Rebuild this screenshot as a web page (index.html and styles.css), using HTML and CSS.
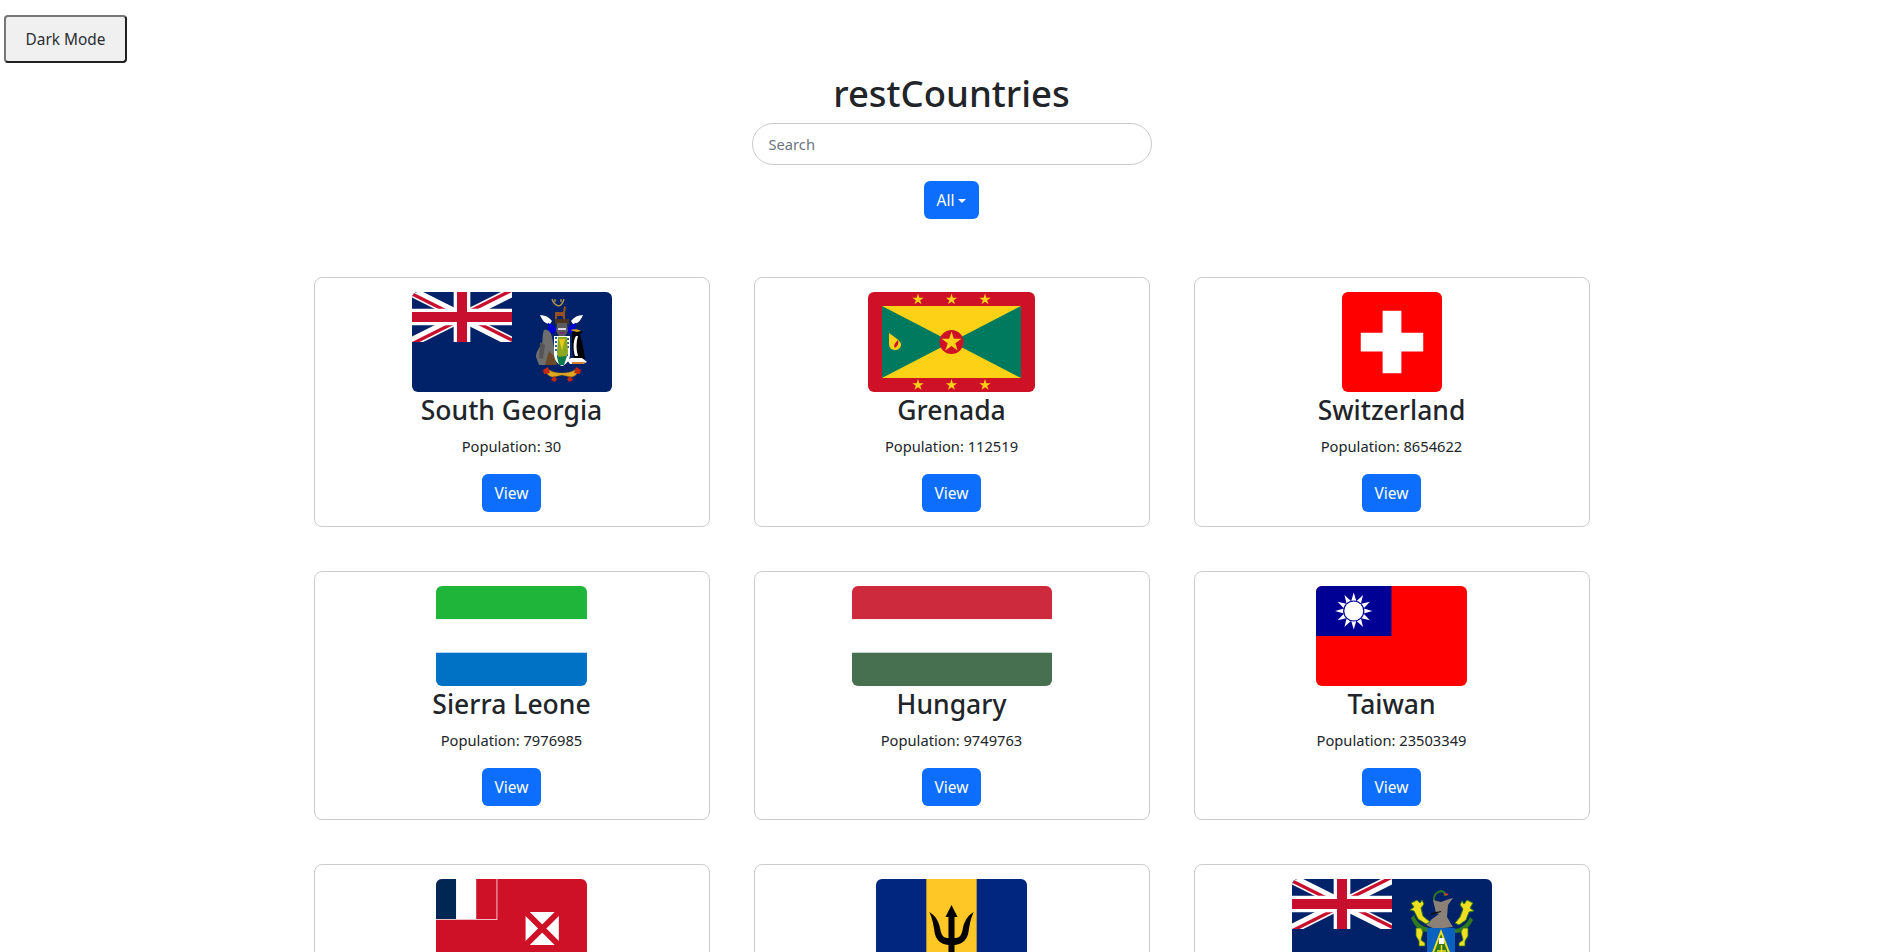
FILE: index.html
```html
<!DOCTYPE html>
<html lang="en">
<head>
<meta charset="utf-8">
<title>restCountries</title>
<link rel="stylesheet" href="styles.css">
</head>
<body>
<button class="theme-toggle" type="button">Dark Mode</button>
<header class="header">
  <h1 class="title">restCountries</h1>
  <input class="search" type="text" placeholder="Search">
  <button class="btn" type="button">All<span class="caret"></span></button>
</header>
<main class="grid">

  <article class="card">
    <svg class="flag" width="200" height="100" viewBox="0 0 200 100">
      <rect width="200" height="100" fill="#012169"/>
      <svg width="100" height="50" viewBox="0 0 60 30">
        <clipPath id="uj1"><path d="M30,15h30v15zv15h-30zh-30v-15zv-15h30z"/></clipPath>
        <rect width="60" height="30" fill="#012169"/>
        <path d="M0,0L60,30M60,0L0,30" stroke="#fff" stroke-width="6"/>
        <path d="M0,0L60,30M60,0L0,30" clip-path="url(#uj1)" stroke="#c8102e" stroke-width="4"/>
        <path d="M30,0V30M0,15H60" stroke="#fff" stroke-width="10"/>
        <path d="M30,0V30M0,15H60" stroke="#c8102e" stroke-width="6"/>
      </svg>
      <path d="M140,7c1,4 3,6 7,7M152,7c-1,4-2,6-5,7M143,7v3M149,7v3" stroke="#b8984a" stroke-width="1.300" fill="none"/>
      <path d="M143,20h8l1-6 2,1-1,6v7h-1.500l-1-4h-5l-1,4h-1.500z" fill="#94501f"/>
      <path d="M143,27h14v5h-14z" fill="#4a3320"/>
      <path d="M128,23c5,0 9,2 12,6l-2,3c-5,0-8-4-10-9zM171,23c-5,0-9,2-12,6l2,3c5,0 8-4 10-9z" fill="#fff"/>
      <path d="M136,31l5,2 3,3h12l3-3 5-2-1,8-5,3-3-3h-11l-3,3-5-3z" fill="#0000d0"/>
      <path d="M145,31h10l1,8-3,5h-6l-3-5z" fill="#5d5a5a"/>
      <path d="M146,36h8v2h-8z" fill="#d8d8f0"/>
      <path d="M147,40h6l-1,2h-4z" fill="#7a2a7a"/>
      <path d="M132,38c4-1 7,2 8,7l2,10 1,18h-16l-3-8c0-6 4-10 6-13 1-4 0-9 2-14z" fill="#6e6e6e"/>
      <path d="M128,50l5,3-2,14-4-1z" fill="#555"/>
      <path d="M133,73l4-14 5,5 3,9z" fill="#6b4a2a"/>
      <path d="M142,44h16v18c0,6-4,11-8,12-4-1-8-6-8-12z" fill="#fff"/>
      <path d="M143,45h2v2h-2zM143,49h2v2h-2zM143,53h2v2h-2zM143,57h2v2h-2zM145,63h2v2h-2zM155,46h2v2h-2zM155,50h2v2h-2zM155,54h2v2h-2zM154,62h2v2h-2z" fill="#2d5fa8"/>
      <path d="M146,45h9l1,15c0,3-3,7-6,8-3-1-5-5-5-8z" fill="#8aa820"/>
      <path d="M147,47h6l-3,12z" fill="#e6c818"/>
      <path d="M145,65l10,-1-3,9h-5z" fill="#0a7a4a"/>
      <path d="M160,40c3-1 7-2 11,0l-3,2 3,12 2,13h-11l-2-13z" fill="#000"/>
      <path d="M164,44c-3,4-3,14-1,20h3c-2-6-2-14 0-20z" fill="#fff"/>
      <path d="M158,38c4-1 8-1 11,1l-4,1z" fill="#d8a020"/>
      <path d="M155,68l4-2h11l5,4-4,2h-13z" fill="#fff"/>
      <path d="M160,70h14l-3,2h-11z" fill="#d88030"/>
      <path d="M135,76c2,3 8,5 15,5s13-2 15-5l2,3c-2,3-5,6-8,6l-9-2-9,2c-3,0-6-3-8-6z" fill="#e0a820" stroke="#a87810" stroke-width=".5"/>
      <path d="M131,78l5-3 2,6-6,1zM169,78l-5-3-2,6 6,1zM139,88l3-4 3,3-2,3zM161,88l-3-4-3,3 2,3z" fill="#c82810"/>
    </svg>
    <h3 class="name">South Georgia</h3>
    <p class="population">Population: 30</p>
    <a class="btn">View</a>
  </article>

  <article class="card">
    <svg class="flag" width="167" height="100" viewBox="0 0 167 100">
      <defs><polygon id="st" points="0,-1 .225,-.309 .951,-.309 .363,.118 .588,.809 0,.382 -.588,.809 -.363,.118 -.951,-.309 -.225,-.309"/></defs>
      <rect width="167" height="100" fill="#ce1126"/>
      <rect x="14" y="14" width="139" height="72" fill="#007a5e"/>
      <path d="M14,14H153L14,86H153z" fill="#fcd116"/>
      <circle cx="83.500" cy="50" r="12" fill="#ce1126"/>
      <g fill="#fcd116">
        <use href="#st" transform="translate(83.500 50) scale(10.500)"/>
        <use href="#st" transform="translate(50 7.500) scale(6)"/>
        <use href="#st" transform="translate(83.500 7.500) scale(6)"/>
        <use href="#st" transform="translate(117 7.500) scale(6)"/>
        <use href="#st" transform="translate(50 93) scale(6)"/>
        <use href="#st" transform="translate(83.500 93) scale(6)"/>
        <use href="#st" transform="translate(117 93) scale(6)"/>
      </g>
      <path d="M21,41c4,3 11,7 12,11 0,4-3,6-6,6-4,0-6-3-6-6z" fill="#fcd116"/>
      <path d="M27,56c-2-2 0-5 3-8 1,3 0,6-3,8z" fill="#ce1126"/>
    </svg>
    <h3 class="name">Grenada</h3>
    <p class="population">Population: 112519</p>
    <a class="btn">View</a>
  </article>

  <article class="card">
    <svg class="flag" width="100" height="100" viewBox="0 0 32 32">
      <rect width="32" height="32" fill="#f00"/>
      <path d="M13,6h6v7h7v6h-7v7h-6v-7h-7v-6h7z" fill="#fff"/>
    </svg>
    <h3 class="name">Switzerland</h3>
    <p class="population">Population: 8654622</p>
    <a class="btn">View</a>
  </article>

  <article class="card">
    <svg class="flag" width="151" height="100" viewBox="0 0 150 100" preserveAspectRatio="none">
      <rect width="150" height="33.300" fill="#1eb53a"/>
      <rect y="33.300" width="150" height="33.400" fill="#fff"/>
      <rect y="66.700" width="150" height="33.300" fill="#0072c6"/>
    </svg>
    <h3 class="name">Sierra Leone</h3>
    <p class="population">Population: 7976985</p>
    <a class="btn">View</a>
  </article>

  <article class="card">
    <svg class="flag" width="200" height="100" viewBox="0 0 200 100">
      <rect width="200" height="33.300" fill="#cd2a3e"/>
      <rect y="33.300" width="200" height="33.400" fill="#fff"/>
      <rect y="66.700" width="200" height="33.300" fill="#477050"/>
    </svg>
    <h3 class="name">Hungary</h3>
    <p class="population">Population: 9749763</p>
    <a class="btn">View</a>
  </article>

  <article class="card">
    <svg class="flag" width="151" height="100" viewBox="0 0 150 100" preserveAspectRatio="none">
      <defs><polygon id="ray" points="0,-18.500 2.800,-9 -2.800,-9" fill="#fff"/></defs>
      <rect width="150" height="100" fill="#fe0000"/>
      <rect width="75" height="50" fill="#000095"/>
      <g transform="translate(37.500 25)">
        <use href="#ray"/><use href="#ray" transform="rotate(30)"/><use href="#ray" transform="rotate(60)"/>
        <use href="#ray" transform="rotate(90)"/><use href="#ray" transform="rotate(120)"/><use href="#ray" transform="rotate(150)"/>
        <use href="#ray" transform="rotate(180)"/><use href="#ray" transform="rotate(210)"/><use href="#ray" transform="rotate(240)"/>
        <use href="#ray" transform="rotate(270)"/><use href="#ray" transform="rotate(300)"/><use href="#ray" transform="rotate(330)"/>
        <circle r="10.600" fill="#000095"/>
        <circle r="9.400" fill="#fff"/>
      </g>
    </svg>
    <h3 class="name">Taiwan</h3>
    <p class="population">Population: 23503349</p>
    <a class="btn">View</a>
  </article>

  <article class="card">
    <svg class="flag" width="151" height="100" viewBox="0 0 150 100" preserveAspectRatio="none">
      <rect width="150" height="100" fill="#ce1126"/>
      <rect width="61" height="41" fill="#f0c0c8"/>
      <rect width="20" height="40" fill="#002654"/>
      <rect x="20" width="20" height="40" fill="#fff"/>
      <rect x="40" width="20" height="40" fill="#ce1126"/>
      <rect x="89" y="33" width="33" height="33" fill="#fff"/>
      <path d="M89,33L122,66M122,33L89,66" stroke="#ce1126" stroke-width="6"/>
    </svg>
    <h3 class="name">Wallis and Futuna</h3>
    <p class="population">Population: 11750</p>
    <a class="btn">View</a>
  </article>

  <article class="card">
    <svg class="flag" width="151" height="100" viewBox="0 0 150 100" preserveAspectRatio="none">
      <rect width="150" height="100" fill="#00267f"/>
      <rect x="50" width="50" height="100" fill="#ffc726"/>
      <path d="M75,26l6,12h-3v21h1c4,0 6-3 7-8 1-6 3-13 11-18-3,6-4,13-5,19-1,9-6,13-14,14v12h-6v-12c-8-1-13-5-14-14-1-6-2-13-5-19 8,5 10,12 11,18 1,5 3,8 7,8h1V38h-3z" fill="#000"/>
    </svg>
    <h3 class="name">Barbados</h3>
    <p class="population">Population: 287371</p>
    <a class="btn">View</a>
  </article>

  <article class="card">
    <svg class="flag" width="200" height="100" viewBox="0 0 200 100">
      <rect width="200" height="100" fill="#012169"/>
      <svg width="100" height="50" viewBox="0 0 60 30">
        <clipPath id="uj2"><path d="M30,15h30v15zv15h-30zh-30v-15zv-15h30z"/></clipPath>
        <rect width="60" height="30" fill="#012169"/>
        <path d="M0,0L60,30M60,0L0,30" stroke="#fff" stroke-width="6"/>
        <path d="M0,0L60,30M60,0L0,30" clip-path="url(#uj2)" stroke="#c8102e" stroke-width="4"/>
        <path d="M30,0V30M0,15H60" stroke="#fff" stroke-width="10"/>
        <path d="M30,0V30M0,15H60" stroke="#c8102e" stroke-width="6"/>
      </svg>
      <path d="M142,22c-1-5 2-9 7-10 3,0 4,2 4,5" stroke="#2f7a1e" stroke-width="2" fill="none"/>
      <path d="M152,14l5,1-3,2z" fill="#e84020"/>
      <path d="M141,21l8,2 8-3 4-1-5,7-1,12 6,10-18,2-9-4 6-6 7-5-3-1z" fill="#8b8176"/>
      <path d="M139,34l10-2v1l-10,3z" fill="#111"/>
      <path d="M119,24l6-3 3,3 2,-3 2,4-3,4 2,8 7,6-4,2-8-5-4-8-4-1 4-3z" fill="#f0de20" stroke="#2f7a1e" stroke-width="1"/>
      <path d="M181,24l-6-3-3,4-2-3-2,4 3,4-3,8-5,6 4,2 7-5 3-8 5-1-4-3z" fill="#f0de20" stroke="#2f7a1e" stroke-width="1"/>
      <path d="M122,36c3,8 9,13 18,13l-4,4c-8,0-14-6-17-14zM178,38c-3,7-10,13-18,12l3,4c8,0 15-6 18-13z" fill="#2f7a1e"/>
      <path d="M124,49h5l2,4-2,8 4,3v3h-6v-5l-3-5z" fill="#f0de20" stroke="#2f7a1e" stroke-width=".8"/>
      <path d="M176,49h-5l-2,4 2,8-4,3v3h6v-5l3-5z" fill="#f0de20" stroke="#2f7a1e" stroke-width=".8"/>
      <path d="M135,49h28v30c0,8-8,14-14,16-6-2-14-8-14-16z" fill="#0a62c0"/>
      <path d="M149,50l13,34h-26z" fill="#f0de20"/>
      <path d="M149,55l10,27h-20z" fill="#2f7a1e"/>
      <rect x="147" y="59" width="5" height="6" fill="#fff"/>
      <path d="M149.500,66v16M145,72h9" stroke="#f0de20" stroke-width="1.500"/>
    </svg>
    <h3 class="name">Pitcairn Islands</h3>
    <p class="population">Population: 56</p>
    <a class="btn">View</a>
  </article>

</main>
</body>
</html>
```
FILE: styles.css
```css
* {
  box-sizing: border-box;
}

html {
  overflow: hidden;
}

body {
  margin: 0;
  background: #fff;
  color: #212529;
  font-family: "Noto Sans", "Open Sans", sans-serif;
  font-size: 16px;
  line-height: 1.5;
}

.theme-toggle {
  display: block;
  width: 123px;
  height: 48px;
  margin: 15px 0 0 4px;
  padding: 0;
  background: #f0f0f0;
  border: 2px outset #767676;
  border-radius: 4px;
  color: #2b2f33;
  font-family: inherit;
  font-size: 15.400px;
}

.header {
  display: flex;
  flex-direction: column;
  align-items: center;
}

.title {
  margin: 6px 0 6px;
  font-size: 36.500px;
  font-weight: 550;
  line-height: 48px;
}

.search {
  width: 400px;
  height: 42px;
  margin-bottom: 16px;
  padding: 0 16px;
  border: 1px solid #ccc;
  border-radius: 21px;
  font-family: inherit;
  font-size: 14.700px;
  color: #212529;
}

.search::placeholder {
  color: #6c757d;
}

.btn {
  display: inline-block;
  height: 38px;
  padding: 0 13px;
  background: #0d6efd;
  border: 0;
  border-radius: 6px;
  color: #fff;
  font-family: inherit;
  font-size: 15.500px;
  line-height: 38px;
}

.caret {
  display: inline-block;
  margin-left: 4px;
  vertical-align: 3px;
  border-top: 4.500px solid #fff;
  border-left: 4.500px solid transparent;
  border-right: 4.500px solid transparent;
}

.grid {
  display: grid;
  grid-template-columns: repeat(3, 396px);
  justify-content: center;
  gap: 44px;
  margin-top: 58px;
}

.card {
  display: flex;
  flex-direction: column;
  align-items: center;
  padding: 14px 13px 13.600px;
  border: 1px solid #ccc;
  border-radius: 8px;
}

.flag {
  display: block;
  border-radius: 6px;
}

.name {
  margin: 1px 0 7px;
  font-size: 26.500px;
  font-weight: 550;
  line-height: 34px;
}

.population {
  margin: 0 0 16px;
  font-size: 14.700px;
  line-height: 24px;
}
```
